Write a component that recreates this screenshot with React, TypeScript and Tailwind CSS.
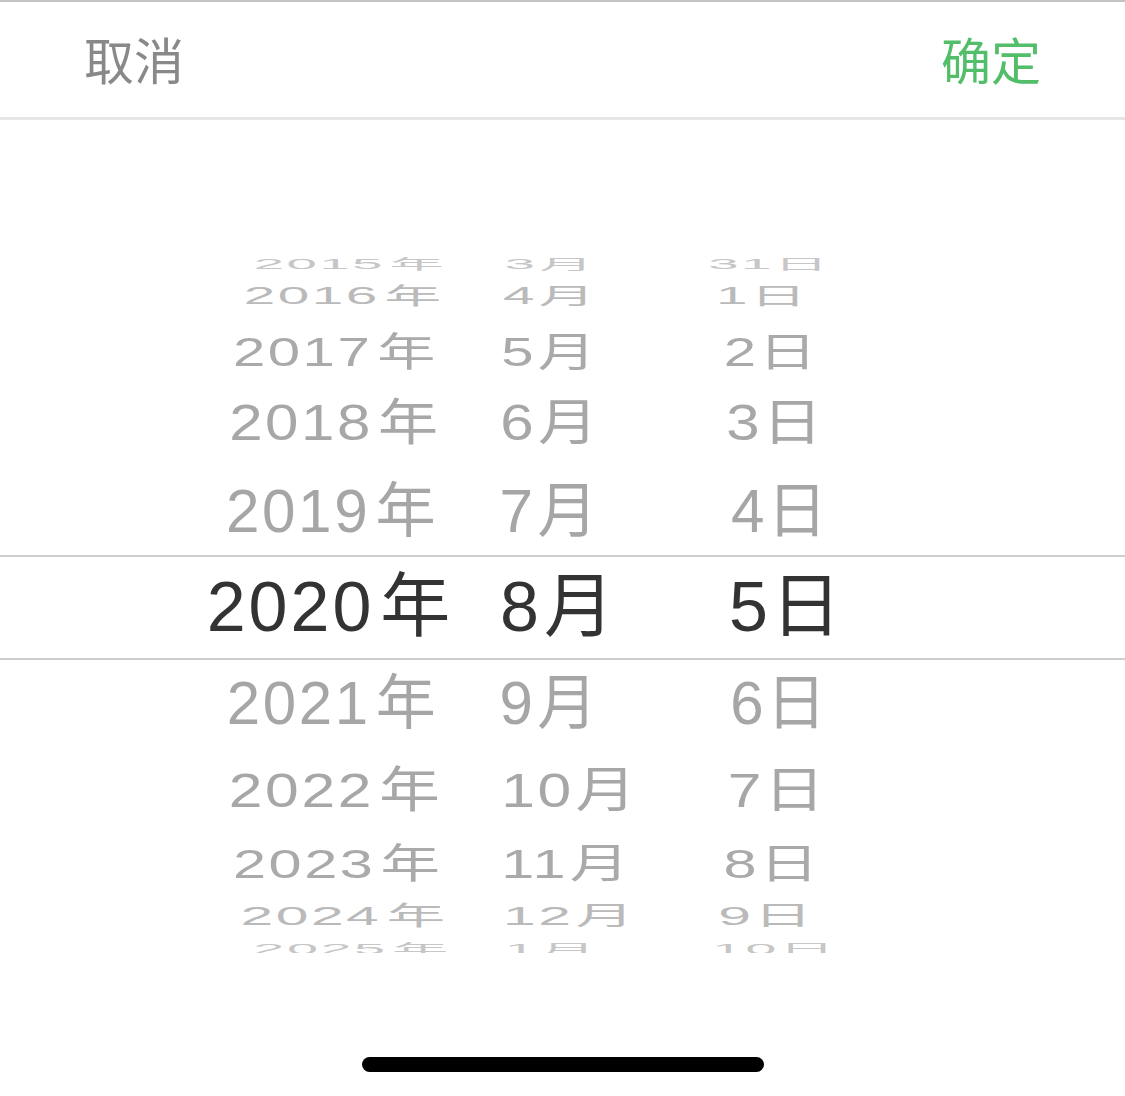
type WheelRow = {
  y: number;
  m: number;
  d: number;
  h: number;
  dy: number;
  sx: number;
  sy: number;
  color: string;
  yx: number;
  mx: number;
  dx: number;
};

// rows above the selected band, top to bottom
const above: WheelRow[] = [
  { y: 2015, m: 3, d: 31, h: 23.5, dy: -3.75, sx: 0.78, sy: 0.2, color: "#c6c6c6", yx: 19.7, mx: 4.6, dx: -17 },
  { y: 2016, m: 4, d: 1, h: 45, dy: -6, sx: 0.81, sy: 0.33, color: "#bababa", yx: 13.4, mx: 3, dx: -24 },
  { y: 2017, m: 5, d: 2, h: 63.4, dy: -3.2, sx: 0.83, sy: 0.57, color: "#aaaaaa", yx: 5, mx: 1.3, dx: -15 },
  { y: 2018, m: 6, d: 3, h: 78.8, dy: -4.6, sx: 0.857, sy: 0.72, color: "#a7a7a7", yx: 4.5, mx: 0.3, dx: -11 },
  { y: 2019, m: 7, d: 4, h: 88.3, dy: -0.25, sx: 0.86, sy: 0.865, color: "#a6a6a6", yx: 1.7, mx: -0.4, dx: -6 },
];

// rows below the selected band, top to bottom
const below: WheelRow[] = [
  { y: 2021, m: 9, d: 6, h: 87, dy: -0.2, sx: 0.857, sy: 0.866, color: "#a6a6a6", yx: 2.2, mx: -0.4, dx: -7 },
  { y: 2022, m: 10, d: 7, h: 80.3, dy: 3.65, sx: 0.865, sy: 0.7, color: "#a7a7a7", yx: 5.2, mx: 1.3, dx: -9 },
  { y: 2023, m: 11, d: 8, h: 62.5, dy: 5.25, sx: 0.85, sy: 0.58, color: "#aaaaaa", yx: 7.4, mx: 1.3, dx: -14 },
  { y: 2024, m: 12, d: 9, h: 42.6, dy: 4.7, sx: 0.84, sy: 0.37, color: "#bababa", yx: 13.7, mx: 3, dx: -20 },
  { y: 2025, m: 1, d: 10, h: 20.6, dy: 6.3, sx: 0.8, sy: 0.2, color: "#c6c6c6", yx: 21.7, mx: 4.6, dx: -12 },
];

function Label({ n, unit, gap }: { n: number; unit: string; gap: string }) {
  return (
    <>
      {n}
      <span className={gap}>{unit}</span>
    </>
  );
}

function Row({ r }: { r: WheelRow }) {
  const t = (x: number) => `translate(${x}px, ${r.dy}px) scale(${r.sx}, ${r.sy})`;
  return (
    <div className="flex items-center pl-[179px]" style={{ height: r.h, color: r.color }}>
      <div className="w-[302px] flex justify-center">
        <span className="whitespace-nowrap" style={{ transform: t(r.yx) }}>
          <Label n={r.y} unit="年" gap="ml-[6px]" />
        </span>
      </div>
      <div className="w-[204px] pl-[19px] flex">
        <span className="whitespace-nowrap origin-left" style={{ transform: t(r.mx) }}>
          <Label n={r.m} unit="月" gap="ml-[2px]" />
        </span>
      </div>
      <div className="w-[203px] flex justify-center">
        <span className="whitespace-nowrap" style={{ transform: t(r.dx) }}>
          <Label n={r.d} unit="日" gap="ml-0" />
        </span>
      </div>
    </div>
  );
}

export default function App() {
  return (
    <div className="w-[1125px] h-[1096px] bg-white flex flex-col font-['Liberation_Sans','Noto_Sans_CJK_SC',sans-serif] overflow-hidden">
      <div className="h-[2px] bg-[#c4c4c4]" />
      <header className="h-[115px] flex items-center justify-between px-[84px] pb-[4px] font-['Noto_Sans_CJK_SC',sans-serif] text-[50px] leading-none">
        <button className="text-[#898989]">取消</button>
        <button className="text-[#52be6a]">确定</button>
      </header>
      <div className="h-[3px] bg-[#e6e6e6]" />

      <div className="h-[136px]" />

      <section className="flex flex-col overflow-hidden text-[70px] leading-none tracking-[3px]">
        {above.map((r) => (
          <Row key={r.y} r={r} />
        ))}

        <div className="h-[105px] border-y-2 border-[#cdcdcd] flex items-center pl-[179px] text-[#333333]">
          <div className="w-[302px] flex justify-center">
            <span className="whitespace-nowrap">
              <Label n={2020} unit="年" gap="ml-[6px]" />
            </span>
          </div>
          <div className="w-[204px] pl-[19px] flex">
            <span className="whitespace-nowrap">
              <Label n={8} unit="月" gap="ml-[2px]" />
            </span>
          </div>
          <div className="w-[203px] flex justify-center">
            <span className="whitespace-nowrap">
              <Label n={5} unit="日" gap="ml-0" />
            </span>
          </div>
        </div>

        {below.map((r) => (
          <Row key={r.y} r={r} />
        ))}
      </section>

      <div className="h-[104px]" />
      <div className="h-[15px] w-[402px] mx-auto rounded-full bg-black" />
    </div>
  );
}
